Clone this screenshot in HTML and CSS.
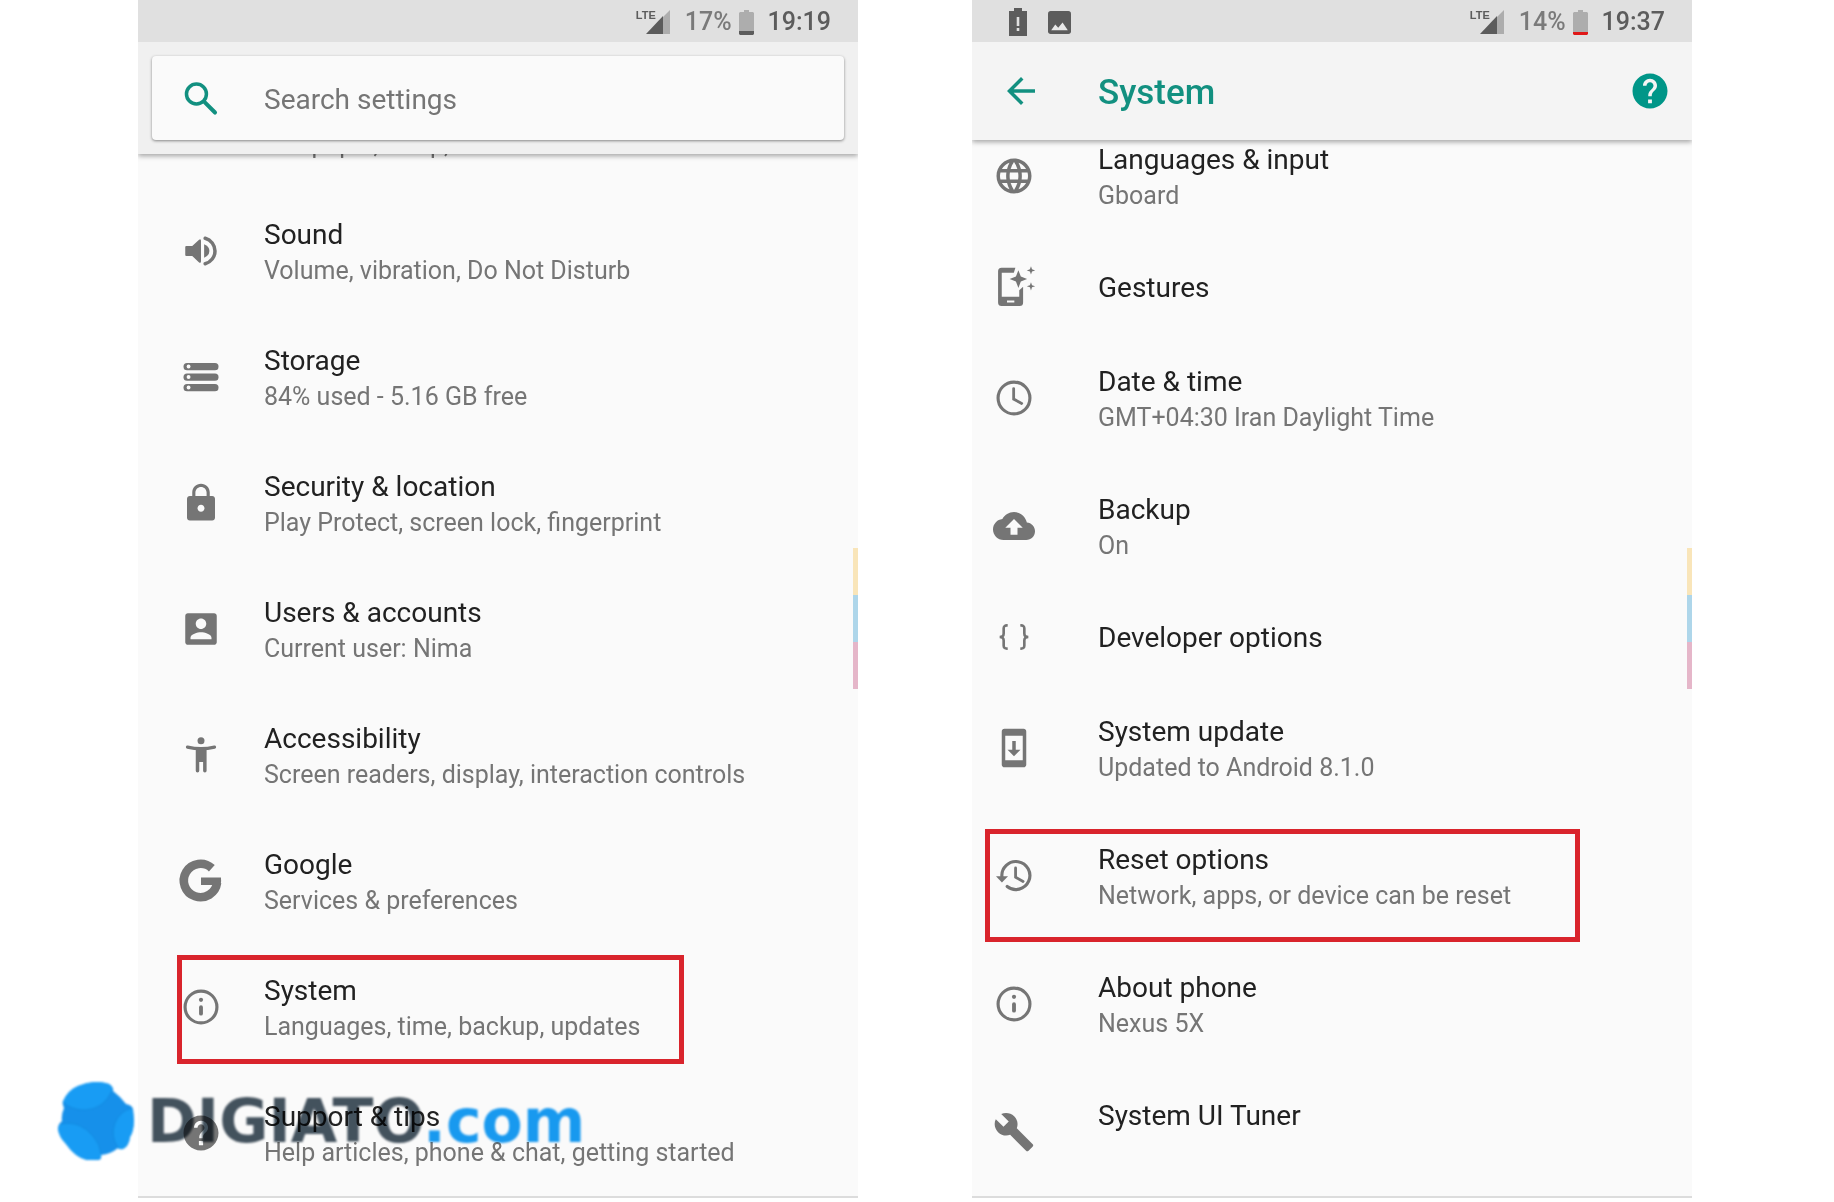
FILE: index.html
```html
<!DOCTYPE html>
<html lang="en">
<head>
    <meta charset="UTF-8">
    <meta name="viewport" content="width=device-width, initial-scale=1.0">
    <title>Settings - System - Reset options</title>
    <link rel="stylesheet" href="styles.css">
</head>
<body>

    <div class="screens">

        <!-- Settings -->
        <div class="phone">
            <div class="status">
                <div class="signal">
                    <span class="lte">LTE</span>
                    <svg width="24" height="24" viewBox="0 0 24 24"><path fill="#adadad" d="M17 7l7-7v24h-7z"/><path fill="#5c5c5c" d="M0 24L17 6v18z"/></svg>
                </div>
                <span class="percent">17%</span>
                <svg class="battery" width="15" height="25" viewBox="0 0 15 25"><path fill="#adadad" d="M5 0h5v2h4l1 1v18H0V3l1-1h4z"/><path fill="#5c5c5c" d="M0 21h15v3l-1 1H1l-1-1z"/></svg>
                <span class="time">19:19</span>
            </div>

            <div class="search-bar">
                <label class="search-box">
                    <svg class="icon" viewBox="0 0 24 24"><g fill="none" stroke="currentColor"><circle cx="9.4" cy="9.7" r="5.7" stroke-width="2"/><path stroke-width="2.3" stroke-linecap="round" d="M14.2 14.5l5.8 5.8"/></g></svg>
                    <input type="text" placeholder="Search settings" aria-label="Search settings">
                </label>
            </div>

            <ul class="list main-list">
                <li><a href="#" class="row">
                    <span class="icon"></span>
                    <span class="text"><span class="title">Display</span><span class="sub">Wallpaper, sleep, font size</span></span>
                </a></li>
                <li><a href="#" class="row">
                    <svg class="icon" viewBox="0 0 24 24"><path d="M3.6 9.1H7l3.9-3.6q1.1-.6 1.1.7v11.6q0 1.3-1.1.7L7 14.9H3.6q-.6 0-.6-.6V9.7q0-.6.6-.6z"/><path d="M13.8 8.2q3 1.2 3 3.8t-3 3.8z"/><path fill="none" stroke="currentColor" stroke-width="2" stroke-linecap="round" d="M14.4 4.7A7.56 7.56 0 0 1 14.4 19.3"/></svg>
                    <span class="text"><span class="title">Sound</span><span class="sub">Volume, vibration, Do Not Disturb</span></span>
                </a></li>
                <li><a href="#" class="row">
                    <svg class="icon" viewBox="0 0 24 24"><rect x="2" y="4" width="20" height="4.1" rx="2"/><rect x="2" y="10" width="20" height="4.1" rx="2"/><rect x="2" y="16" width="20" height="4.1" rx="2"/><g fill="#fafafa"><circle cx="4.9" cy="6" r="1.1"/><circle cx="4.9" cy="12" r="1.1"/><circle cx="4.9" cy="18" r="1.1"/></g></svg>
                    <span class="text"><span class="title">Storage</span><span class="sub">84% used - 5.16 GB free</span></span>
                </a></li>
                <li><a href="#" class="row">
                    <svg class="icon" viewBox="0 0 24 24"><path d="M18.4 8H17V6c0-2.760-2.240-5-5-5S7 3.240 7 6v2H5.600C4.700 8 4 8.700 4 9.600v10.800c0 .9.7 1.600 1.600 1.600h12.800c.9 0 1.600-.7 1.600-1.600V9.600c0-.9-.7-1.600-1.600-1.600zM12 17c-1.100 0-2-.9-2-2s.9-2 2-2 2 .9 2 2-.9 2-2 2zm3.200-9H8.800V6c0-1.800 1.400-3.200 3.200-3.200s3.200 1.400 3.200 3.200v2z"/></svg>
                    <span class="text"><span class="title">Security &amp; location</span><span class="sub">Play Protect, screen lock, fingerprint</span></span>
                </a></li>
                <li><a href="#" class="row">
                    <svg class="icon" viewBox="0 0 24 24"><path d="M3 4.500v15c0 .8.7 1.500 1.500 1.500h15c.8 0 1.500-.7 1.500-1.500v-15c0-.8-.7-1.500-1.500-1.500h-15C3.700 3 3 3.700 3 4.500zM15 9c0 1.660-1.340 3-3 3s-3-1.340-3-3 1.340-3 3-3 3 1.340 3 3zm-9 8c0-2 4-3.100 6-3.100s6 1.100 6 3.100v.8H6V17z"/></svg>
                    <span class="text"><span class="title">Users &amp; accounts</span><span class="sub">Current user: Nima</span></span>
                </a></li>
                <li><a href="#" class="row">
                    <svg class="icon" viewBox="0 0 24 24"><circle cx="12" cy="3.900" r="2"/><path fill="none" stroke="currentColor" stroke-width="1.900" stroke-linecap="round" d="M4.300 7.500Q12 9.300 19.700 7.500"/><path d="M9 8h6.200v13q0 1-1 1t-1-1v-5h-2.200v5q0 1-1 1t-1-1z"/></svg>
                    <span class="text"><span class="title">Accessibility</span><span class="sub">Screen readers, display, interaction controls</span></span>
                </a></li>
                <li><a href="#" class="row">
                    <svg class="icon" viewBox="0 0 24 24"><path fill="none" stroke="currentColor" stroke-width="4.900" d="M18.200 4.700A9.550 9.550 0 1 0 21.200 13"/><path d="M12 10h11.400q.3 2.300-.2 4.300H12z"/></svg>
                    <span class="text"><span class="title">Google</span><span class="sub">Services &amp; preferences</span></span>
                </a></li>
                <li><a href="#" class="row">
                    <svg class="icon" viewBox="0 0 24 24"><circle cx="12" cy="12" r="9.100" fill="none" stroke="currentColor" stroke-width="1.800"/><circle cx="12" cy="7.900" r="1.200"/><rect x="10.900" y="11" width="2.200" height="5.900" rx="1.100"/></svg>
                    <span class="text"><span class="title">System</span><span class="sub">Languages, time, backup, updates</span></span>
                    <span class="mark mark-system"></span>
                </a></li>
                <li><a href="#" class="row">
                    <svg class="icon" viewBox="0 0 24 24"><path d="M12 2C6.480 2 2 6.480 2 12s4.480 10 10 10 10-4.480 10-10S17.520 2 12 2zm1.200 17h-2.400v-2.400h2.400V19zm1.870-7.750l-.9.920C13.450 12.900 13 13.500 13 15h-2v-.5c0-1.100.45-2.100 1.170-2.830l1.240-1.260c.37-.36.59-.86.59-1.410 0-1.100-.9-2-2-2s-2 .9-2 2H8c0-2.210 1.790-4 4-4s4 1.790 4 4c0 .88-.36 1.680-.93 2.250z"/></svg>
                    <span class="text"><span class="title">Support &amp; tips</span><span class="sub">Help articles, phone &amp; chat, getting started</span></span>
                </a></li>
            </ul>
            <div class="edge"><i></i><i></i><i></i></div>
        </div>

        <!-- System -->
        <div class="phone">
            <div class="status">
                <div class="notifications">
                    <svg width="18" height="28" viewBox="0 0 18 28"><path fill="#5c5c5c" fill-rule="evenodd" d="M5 0h8v3h5v25H0V3h5zM7.700 9v9h2.600V9zM7.700 20v3h2.600v-3z"/></svg>
                    <svg width="23" height="23" viewBox="3 3 18 18"><path fill="#5c5c5c" d="M21 19V5c0-1.100-.9-2-2-2H5c-1.100 0-2 .9-2 2v14c0 1.100.9 2 2 2h14c1.100 0 2-.9 2-2z"/><path fill="#e8e8e8" d="M5.500 18l3.200-4.500 2.300 2.700 3.400-4.200L18.500 18z"/></svg>
                </div>
                <div class="signal">
                    <span class="lte">LTE</span>
                    <svg width="24" height="24" viewBox="0 0 24 24"><path fill="#adadad" d="M17 7l7-7v24h-7z"/><path fill="#5c5c5c" d="M0 24L17 6v18z"/></svg>
                </div>
                <span class="percent">14%</span>
                <svg class="battery" width="15" height="25" viewBox="0 0 15 25"><path fill="#adadad" d="M5 0h5v2h4l1 1v19H0V3l1-1h4z"/><path fill="#e01818" d="M0 22h15v2l-1 1H1l-1-1z"/></svg>
                <span class="time">19:37</span>
            </div>

            <div class="app-bar">
                <button class="icon-button" aria-label="Back">
                    <svg class="icon" viewBox="0 0 24 24"><path d="M20 11H7.830l5.590-5.590L12 4l-8 8 8 8 1.410-1.410L7.830 13H20v-2z"/></svg>
                </button>
                <h1>System</h1>
                <button class="icon-button" aria-label="Help">
                    <svg class="icon help" viewBox="0 0 24 24"><path d="M12 2C6.480 2 2 6.480 2 12s4.480 10 10 10 10-4.480 10-10S17.520 2 12 2zm1.100 17h-2.200v-2.200h2.200V19zm1.970-7.750l-.9.920C13.450 12.900 13 13.500 13 15h-2v-.5c0-1.100.45-2.100 1.170-2.830l1.240-1.260c.37-.36.59-.86.59-1.410 0-1.100-.9-2-2-2s-2 .9-2 2H8c0-2.210 1.790-4 4-4s4 1.790 4 4c0 .88-.36 1.680-.93 2.250z"/></svg>
                </button>
            </div>

            <ul class="list system-list">
                <li><a href="#" class="row">
                    <svg class="icon" viewBox="0 0 24 24"><path d="M11.990 2C6.470 2 2 6.480 2 12s4.470 10 9.990 10C17.520 22 22 17.520 22 12S17.520 2 11.990 2zm6.930 6h-2.950c-.32-1.250-.78-2.450-1.380-3.560 1.840.63 3.370 1.910 4.330 3.560zM12 4.040c.83 1.200 1.480 2.530 1.910 3.960h-3.820c.43-1.430 1.080-2.760 1.910-3.960zM4.260 14C4.100 13.360 4 12.690 4 12s.1-1.360.26-2h3.380c-.08.66-.14 1.320-.14 2 0 .68.06 1.340.14 2H4.260zm.82 2h2.950c.32 1.250.78 2.450 1.380 3.560-1.840-.63-3.370-1.900-4.330-3.560zm2.950-8H5.080c.96-1.660 2.490-2.930 4.330-3.560C8.810 5.550 8.350 6.750 8.030 8zM12 19.960c-.83-1.200-1.480-2.530-1.910-3.960h3.820c-.43 1.430-1.080 2.760-1.910 3.960zM14.340 14H9.660c-.09-.66-.16-1.320-.16-2 0-.68.07-1.350.16-2h4.680c.09.65.16 1.320.16 2 0 .68-.07 1.340-.16 2zm.25 5.560c.6-1.110 1.060-2.310 1.380-3.560h2.950c-.96 1.650-2.490 2.930-4.330 3.560zM16.360 14c.08-.66.14-1.320.14-2 0-.68-.06-1.340-.14-2h3.380c.16.64.26 1.310.26 2s-.1 1.360-.26 2h-3.380z"/></svg>
                    <span class="text"><span class="title">Languages &amp; input</span><span class="sub">Gboard</span></span>
                </a></li>
                <li><a href="#" class="row">
                    <svg class="icon" viewBox="0 0 24 24"><path fill-rule="evenodd" d="M12.800 1l-.9 2.800H5v13.700h10v-3.700l2.200-2V20.900q0 2-2 2H4.900q-2 0-2-2V3q0-2 2-2zM8 19.700v1.100h4.200v-1.100z"/><path d="M14.500 2.400l1.400 3.600 3.600 1.400-3.600 1.400-1.400 3.800-1.400-3.800-3.600-1.400 3.600-1.400zM21.700.2l.6 1.700 1.800.6-1.800.6-.6 1.800-.6-1.800-1.800-.6 1.800-.6zM21.700 9.300l.6 1.700 1.800.6-1.800.6-.6 1.800-.6-1.800-1.800-.6 1.800-.6z"/></svg>
                    <span class="text"><span class="title">Gestures</span></span>
                </a></li>
                <li><a href="#" class="row">
                    <svg class="icon" viewBox="0 0 24 24"><g fill="none" stroke="currentColor"><circle cx="12" cy="12" r="9.100" stroke-width="1.800"/><path stroke-width="1.600" stroke-linecap="round" d="M11.800 6.600v6l4.600 2.500"/></g></svg>
                    <span class="text"><span class="title">Date &amp; time</span><span class="sub">GMT+04:30 Iran Daylight Time</span></span>
                </a></li>
                <li><a href="#" class="row">
                    <svg class="icon" viewBox="0 0 24 24"><path d="M19.350 10.040C18.670 6.590 15.640 4 12 4 9.110 4 6.600 5.640 5.350 8.040 2.340 8.360 0 10.910 0 14c0 3.310 2.690 6 6 6h13c2.760 0 5-2.240 5-5 0-2.640-2.050-4.780-4.650-4.960zM14 13v4h-4v-4H7l5-5 5 5h-3z"/></svg>
                    <span class="text"><span class="title">Backup</span><span class="sub">On</span></span>
                </a></li>
                <li><a href="#" class="row">
                    <svg class="icon" viewBox="0 0 24 24"><g fill="none" stroke="currentColor" stroke-width="1.500"><path d="M8.400 5.400Q6.100 5.200 6.100 7v3q0 2-2.300 2 2.300 0 2.300 2v3q0 1.800 2.300 1.600"/><path d="M15.600 5.400q2.300-.2 2.300 1.600v3q0 2 2.300 2-2.300 0-2.300 2v3q0 1.800-2.300 1.600"/></g></svg>
                    <span class="text"><span class="title">Developer options</span></span>
                </a></li>
                <li><a href="#" class="row">
                    <svg class="icon" viewBox="0 0 24 24"><path d="M17.500 1h-11C5.700 1 5 1.700 5 2.500v19c0 .8.7 1.500 1.500 1.500h11c.8 0 1.500-.7 1.500-1.500v-19c0-.8-.7-1.500-1.500-1.500zM17 19H7V5h10v14zm-1.300-6H13V8h-2v5H8.300l3.700 3.700z"/></svg>
                    <span class="text"><span class="title">System update</span><span class="sub">Updated to Android 8.1.0</span></span>
                </a></li>
                <li><a href="#" class="row">
                    <svg class="icon" viewBox="0 0 24 24"><g fill="none" stroke="currentColor" stroke-linecap="round"><path stroke-width="1.800" d="M5.100 12.500A8 8 0 1 1 8.100 18"/><path stroke-width="1.600" d="M12.900 7.400v5.300l4.300 2.400"/></g><path d="M1.700 12.100h6.900l-3.500 3.600z"/></svg>
                    <span class="text"><span class="title">Reset options</span><span class="sub">Network, apps, or device can be reset</span></span>
                    <span class="mark mark-reset"></span>
                </a></li>
                <li><a href="#" class="row">
                    <svg class="icon" viewBox="0 0 24 24"><circle cx="12" cy="12" r="9.100" fill="none" stroke="currentColor" stroke-width="1.800"/><circle cx="12" cy="7.900" r="1.200"/><rect x="10.900" y="11" width="2.200" height="5.900" rx="1.100"/></svg>
                    <span class="text"><span class="title">About phone</span><span class="sub">Nexus 5X</span></span>
                </a></li>
                <li><a href="#" class="row">
                    <svg class="icon" viewBox="0 0 24 24"><path d="M22.700 19l-9.100-9.100c.9-2.300.4-5-1.500-6.900-2-2-5-2.400-7.400-1.300L9 6 6 9 1.600 4.700C.4 7.100.9 10.100 2.900 12.100c1.900 1.900 4.600 2.400 6.900 1.500l9.100 9.100c.4.4 1 .4 1.400 0l2.300-2.300c.5-.4.5-1.100.1-1.400z"/></svg>
                    <span class="text"><span class="title">System UI Tuner</span><span class="sub">&nbsp;</span></span>
                </a></li>
            </ul>
            <div class="edge"><i></i><i></i><i></i></div>
        </div>

    </div>

    <!-- site watermark -->
    <div class="watermark">
        <svg width="76" height="78" viewBox="0 0 76 78">
            <path fill="#1690ea" d="M20 4Q37-3 51 2q5 3 4 7 8 6 13 13 6 1 7 5 3 19-3 28-1 9-7 12-3 1-5-1-7 6-17 7 1 5-3 5Q22 82 8 62 1 55 0 47q0-5 4-8-1-6 2-13-2-4-1-7Q10 8 20 4z"/>
            <path fill="#189cf4" d="M20 4Q37-3 51 2q4 3 3 6Q46 27 27 28 13 28 5 20 10 8 20 4z"/>
            <path fill="#189cf4" d="M2 42Q22 38 35 54q7 8 8 18 1 5-3 5Q22 82 8 62 1 55 0 47z"/>
            <path fill="#189cf4" d="M74 26q4 20-2 29-1 9-7 12h-4q-9-12-4-26 5-12 17-15z"/>
            <g fill="none" stroke="#0f7fd2" stroke-opacity=".5"><path d="M5 20q8 8 22 8 19-1 27-19"/><path d="M2 42q20-4 33 12 7 8 8 18"/><path d="M61 67q-9-12-4-26 5-12 17-15"/></g>
        </svg>
        <span class="brand">DIGIATO<span>.com</span></span>
    </div>

</body>
</html>
```
FILE: styles.css
```css
* {
    box-sizing: border-box;
}
body {
    margin: 0;
    position: relative;
    background-color: #fff;
    font-family: Roboto, "Noto Sans", sans-serif;
}
.screens {
    display: grid;
    grid-template-columns: 1fr 1fr;
    column-gap: 114px;
    padding: 0 142px 4px 138px;
}
.phone {
    position: relative;
    overflow: hidden;
    background-color: #fafafa;
    border-bottom: 2px solid #dcdcdc;
}

/* status bar */
.status {
    position: relative;
    z-index: 2;
    display: flex;
    align-items: center;
    justify-content: flex-end;
    height: 42px;
    padding: 2px 27px 0 37px;
    background-color: #e0e0e0;
    font-size: 25px;
    font-weight: 500;
    line-height: 40px;
    color: #5c5c5c;
}
.notifications {
    display: flex;
    align-items: center;
    gap: 21px;
    margin-right: auto;
}
.signal {
    position: relative;
    display: flex;
    margin-right: 15px;
}
.lte {
    position: absolute;
    right: 14px;
    top: -2px;
    font-family: "Liberation Sans", sans-serif;
    font-size: 11px;
    font-weight: bold;
    line-height: 14px;
}
.percent {
    color: #7a7a7a;
}
.battery {
    margin: 0 14px 0 7px;
}

/* headers */
.search-bar,
.app-bar {
    position: relative;
    z-index: 1;
    box-shadow: 0 2px 5px rgba(0, 0, 0, 0.35);
}
.search-bar {
    padding: 14px;
    background-color: #f0f0f0;
}
.search-box {
    display: flex;
    align-items: center;
    height: 84px;
    padding-left: 28px;
    background-color: #fafafa;
    border-radius: 4px;
    box-shadow: 0 1px 3px rgba(0, 0, 0, 0.45);
    color: #129080;
}
.search-box input {
    flex: 1;
    min-width: 0;
    margin-left: 42px;
    padding: 2px 0 0;
    border: none;
    outline: none;
    background: none;
    font-family: inherit;
    font-size: 28px;
    color: #212121;
}
.search-box input::placeholder {
    color: #757575;
    opacity: 1;
}
.app-bar {
    display: flex;
    align-items: center;
    height: 98px;
    padding: 0 21px 0 28px;
    background-color: #f4f4f4;
    color: #129080;
}
.app-bar h1 {
    flex: 1;
    margin: 0 0 0 56px;
    padding-top: 4px;
    font-size: 35px;
    font-weight: 500;
    line-height: 42px;
}
.icon-button {
    padding: 0;
    border: none;
    background: none;
    color: inherit;
    cursor: pointer;
}
.help {
    color: #009688;
}

/* rows */
.icon {
    display: block;
    flex: none;
    width: 42px;
    height: 42px;
    fill: currentColor;
    overflow: visible;
}
.list {
    margin: 0;
    padding: 0;
    list-style: none;
}
.row {
    position: relative;
    display: flex;
    align-items: center;
    color: #757575;
    text-decoration: none;
}
.text {
    padding: 3px 0 1px;
}
.title,
.sub {
    display: block;
    white-space: nowrap;
}
.title {
    font-size: 28px;
    line-height: 38px;
    color: #212121;
}
.sub {
    font-size: 25px;
    line-height: 34px;
}
/* both lists are scrolled a little under their header */
.main-list {
    margin-top: -92px;
}
.main-list .row {
    gap: 42px;
    padding: 25px 0 25px 42px;
}
.system-list {
    margin-top: -28px;
}
.system-list .row {
    gap: 63px;
    padding: 26px 0 26px 21px;
}

/* red frames */
.mark {
    position: absolute;
    border: 5px solid #d9242c;
}
.mark-system {
    top: 11px;
    right: 174px;
    bottom: 6px;
    left: 39px;
}
.mark-reset {
    top: 17px;
    right: 112px;
    bottom: -2px;
    left: 13px;
}

/* coloured tab on the screen edge */
.edge {
    position: absolute;
    top: 548px;
    right: 0;
    width: 5px;
}
.edge i {
    display: block;
    height: 47px;
    background-color: #f9e5b9;
}
.edge i:nth-child(2) {
    background-color: #aed6ea;
}
.edge i:nth-child(3) {
    background-color: #e5b6c9;
}

.watermark {
    position: absolute;
    left: 58px;
    bottom: 42px;
    z-index: 3;
    display: flex;
    align-items: center;
    gap: 13px;
    filter: blur(1px);
    mix-blend-mode: multiply;
    pointer-events: none;
}
.brand {
    font-family: "DejaVu Sans", sans-serif;
    font-size: 60px;
    font-weight: bold;
    line-height: 78px;
    color: #44535f;
}
.brand span {
    color: #189cf4;
}
```
